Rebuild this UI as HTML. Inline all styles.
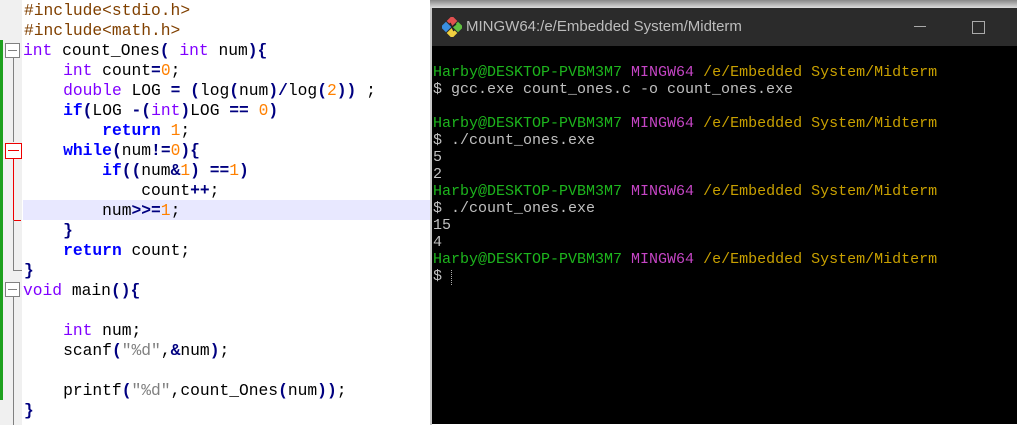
<!DOCTYPE html>
<html><head><meta charset="utf-8"><style>
*{margin:0;padding:0}
body{width:1017px;height:425px;overflow:hidden;background:#fff;position:relative;font-family:"Liberation Mono",monospace}
.ed{position:absolute;left:0;top:0;width:432px;height:425px;background:#fff}
.gut{position:absolute;left:0;top:0;width:22px;height:425px;background:#f0f0f0}
.ln{position:absolute;left:24px;font-size:16.3px;line-height:20px;height:20px;white-space:pre;color:#000}
.hl{position:absolute;left:23px;top:200px;width:409px;height:20px;background:#e8e8ff}
.p{color:#8000ff}.b{color:#0000ff;font-weight:bold}.o{color:#ff8000}.br{color:#804000}.n{color:#000080;font-weight:bold}.g{color:#808080}
.term{position:absolute;left:432px;top:8px;width:585px;height:416px;background:#000}
.tb{position:absolute;left:0;top:0;width:585px;height:38px;background:#2b2b2b;color:#bdbdbd;font-family:"Liberation Sans",sans-serif;font-size:15px}
.tl{position:absolute;left:1px;font-size:15px;line-height:17px;white-space:pre;color:#c0c0c0}
.gr{color:#1db51d}.mg{color:#c545c5}.yl{color:#c8a000}
</style></head><body>
<div class="ed">
<div class="gut"></div>
<div style="position:absolute;left:0;top:40px;width:3px;height:360px;background:#1ea01e"></div>
<div class="hl"></div>
<div style="position:absolute;left:13px;top:57px;width:1px;height:85px;background:#808080"></div>
<div style="position:absolute;left:13px;top:159px;width:1px;height:52px;background:#e00"></div>
<div style="position:absolute;left:13px;top:220px;width:8px;height:1px;background:#e00"></div>
<div style="position:absolute;left:13px;top:211px;width:1px;height:10px;background:#e00"></div>
<div style="position:absolute;left:13px;top:220px;width:1px;height:50px;background:#808080"></div>
<div style="position:absolute;left:13px;top:270px;width:9px;height:1px;background:#808080"></div>
<div style="position:absolute;left:13px;top:297px;width:1px;height:128px;background:#808080"></div>
<div style="position:absolute;left:5px;top:43px;width:15px;height:15px;border:1px solid #808080;background:#fff;box-sizing:border-box"><div style="position:absolute;left:2px;top:6px;width:9px;height:1px;background:#808080"></div></div>
<div style="position:absolute;left:5px;top:143px;width:17px;height:16px;border:1px solid #e00;background:#fff;box-sizing:border-box"><div style="position:absolute;left:2px;top:6px;width:11px;height:1px;background:#e00"></div></div>
<div style="position:absolute;left:5px;top:282px;width:15px;height:15px;border:1px solid #808080;background:#fff;box-sizing:border-box"><div style="position:absolute;left:2px;top:6px;width:9px;height:1px;background:#808080"></div></div>
<div class="ln br" style="top:1px">#include&lt;stdio.h&gt;</div>
<div class="ln br" style="top:21px">#include&lt;math.h&gt;</div>
<div class="ln" style="top:41px;left:23px"><span class="p">int</span> count_Ones<span class="n">(</span> <span class="p">int</span> num<span class="n">){</span></div>
<div class="ln" style="top:61px">    <span class="p">int</span> count<span class="n">=</span><span class="o">0</span>;</div>
<div class="ln" style="top:81px">    <span class="p">double</span> LOG <span class="n">=</span> <span class="n">(</span>log<span class="n">(</span>num<span class="n">)/</span>log<span class="n">(</span><span class="o">2</span><span class="n">))</span> ;</div>
<div class="ln" style="top:101px">    <span class="b">if</span><span class="n">(</span>LOG <span class="n">-(</span><span class="p">int</span><span class="n">)</span>LOG <span class="n">==</span> <span class="o">0</span><span class="n">)</span></div>
<div class="ln" style="top:121px">        <span class="b">return</span> <span class="o">1</span>;</div>
<div class="ln" style="top:141px">    <span class="b">while</span><span class="n">(</span>num<span class="n">!=</span><span class="o">0</span><span class="n">){</span></div>
<div class="ln" style="top:161px">        <span class="b">if</span><span class="n">((</span>num<span class="n">&amp;</span><span class="o">1</span><span class="n">)</span> <span class="n">==</span><span class="o">1</span><span class="n">)</span></div>
<div class="ln" style="top:181px">            count<span class="n">++</span>;</div>
<div class="ln" style="top:201px">        num<span class="n">&gt;&gt;=</span><span class="o">1</span>;</div>
<div class="ln n" style="top:221px">    }</div>
<div class="ln" style="top:241px">    <span class="b">return</span> count;</div>
<div class="ln n" style="top:261px">}</div>
<div class="ln" style="top:281px;left:23px"><span class="p">void</span> main<span class="n">(){</span></div>
<div class="ln" style="top:321px">    <span class="p">int</span> num;</div>
<div class="ln" style="top:341px">    scanf<span class="n">(</span><span class="g">"%d"</span>,<span class="n">&amp;</span>num<span class="n">)</span>;</div>
<div class="ln" style="top:381px">    printf<span class="n">(</span><span class="g">"%d"</span>,count_Ones<span class="n">(</span>num<span class="n">))</span>;</div>
<div class="ln n" style="top:401px">}</div>
</div>
<div style="position:absolute;left:430px;top:0;width:587px;height:8px;background:linear-gradient(#888,#ddd)"></div>
<div style="position:absolute;left:430px;top:8px;width:2px;height:417px;background:#c8c8c8"></div>
<div class="term">
<div class="tb">
<svg style="position:absolute;left:10px;top:9px" width="20" height="20" viewBox="0 0 20 20"><g transform="rotate(45 10 10)"><rect x="2" y="2" width="7.5" height="7.5" fill="#e05050"/><rect x="10.5" y="2" width="7.5" height="7.5" fill="#60c040"/><rect x="2" y="10.5" width="7.5" height="7.5" fill="#3a8ee0"/><rect x="10.5" y="10.5" width="7.5" height="7.5" fill="#f0d040"/></g><path d="M8 6 L12 14 M10 10 L14 7" stroke="#222" stroke-width="1.5"/></svg>
<div style="position:absolute;left:34px;top:10px">MINGW64:/e/Embedded System/Midterm</div>
<div style="position:absolute;left:482px;top:18px;width:12px;height:1px;background:#aaa"></div>
<div style="position:absolute;left:540px;top:13px;width:11px;height:11px;border:1px solid #aaa"></div>
</div>
<div class="tl" style="top:56px"><span class="gr">Harby@DESKTOP-PVBM3M7</span> <span class="mg">MINGW64</span> <span class="yl">/e/Embedded System/Midterm</span></div>
<div class="tl" style="top:73px">$ gcc.exe count_ones.c -o count_ones.exe</div>
<div class="tl" style="top:107px"><span class="gr">Harby@DESKTOP-PVBM3M7</span> <span class="mg">MINGW64</span> <span class="yl">/e/Embedded System/Midterm</span></div>
<div class="tl" style="top:124px">$ ./count_ones.exe</div>
<div class="tl" style="top:141px">5</div>
<div class="tl" style="top:158px">2</div>
<div class="tl" style="top:175px"><span class="gr">Harby@DESKTOP-PVBM3M7</span> <span class="mg">MINGW64</span> <span class="yl">/e/Embedded System/Midterm</span></div>
<div class="tl" style="top:192px">$ ./count_ones.exe</div>
<div class="tl" style="top:209px">15</div>
<div class="tl" style="top:226px">4</div>
<div class="tl" style="top:243px"><span class="gr">Harby@DESKTOP-PVBM3M7</span> <span class="mg">MINGW64</span> <span class="yl">/e/Embedded System/Midterm</span></div>
<div class="tl" style="top:260px">$</div>
<div style="position:absolute;left:19px;top:262px;width:0;height:15px;border-left:1px dotted #aaa"></div>
</div>
</body></html>
